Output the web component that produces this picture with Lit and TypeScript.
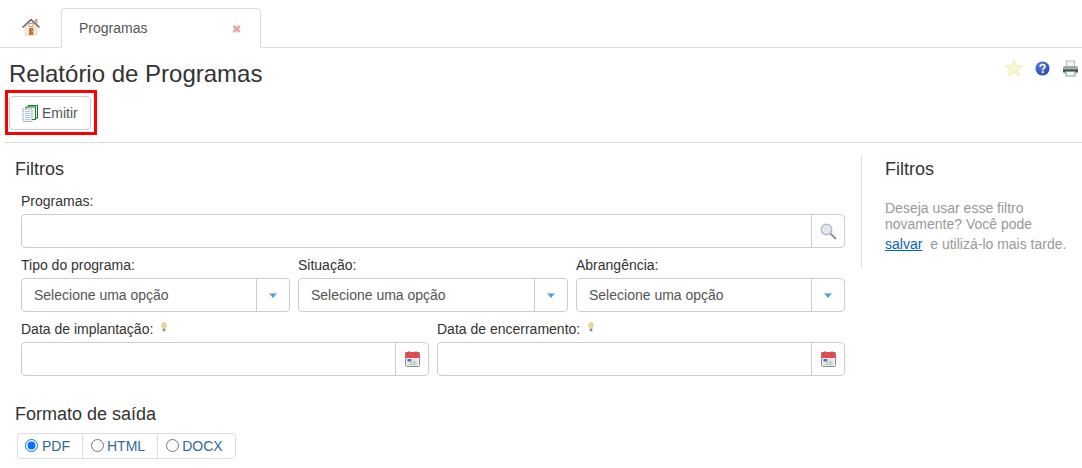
import { LitElement, html, css, svg } from "lit";
import { customElement } from "lit/decorators.js";

const house = svg`<svg width="20" height="20" viewBox="0 0 20 20"><path d="M14 2h2.5v5L14 5z" fill="#c9a58c"/><path d="M4 9.5 10 4l6 5.5V18H4z" fill="#f6ebe0" stroke="#dfccb9" stroke-width=".6"/><path d="M1.5 10.5 10 2.5l8.5 8" fill="none" stroke="#6a605c" stroke-width="1.5"/><rect x="8" y="11" width="4.4" height="7" fill="#c8762d"/><rect x="8" y="6.5" width="4" height="3" fill="#fff" stroke="#a9825f" stroke-width=".7"/><circle cx="11.3" cy="14.5" r=".5" fill="#fbe3b0"/></svg>`;
const docs = svg`<svg width="16" height="17" viewBox="0 0 16 17"><rect x="6.5" y=".5" width="9" height="12.5" fill="#dff0dd" stroke="#15782a"/><rect x="4" y="2" width="9.5" height="12.5" fill="#f0f8ef" stroke="#15782a"/><rect x="1" y="4" width="9" height="12.5" fill="#f1f5fc" stroke="#8f959e" stroke-dasharray="1 .6"/><path d="M3 6.5h5.5M3 8.5h5.5M3 10.5h5.5M3 12.5h5.5M3 14.5h5.5" stroke="#b4c9ea"/></svg>`;
const star = svg`<svg width="18" height="18" viewBox="0 0 18 18"><path d="M9 .8l2.5 5.6 6 .6-4.5 4 1.3 6L9 13.9 3.7 17l1.3-6-4.5-4 6-.6z" fill="#f9f5cc" stroke="#ece6b6" stroke-width=".7"/></svg>`;
const help = svg`<svg width="15" height="15" viewBox="0 0 15 15"><defs><radialGradient id="hb" cx=".4" cy=".3" r=".8"><stop offset="0" stop-color="#5a7fe0"/><stop offset="1" stop-color="#1f3fa8"/></radialGradient></defs><circle cx="7.5" cy="7.5" r="7" fill="url(#hb)"/><path d="M5.2 5.8c0-3 4.8-3 4.8-.2 0 1.8-2.3 1.8-2.3 3.6" fill="none" stroke="#fff" stroke-width="1.7"/><rect x="6.7" y="10.2" width="2" height="2" fill="#fff"/></svg>`;
const printer = svg`<svg width="17" height="17" viewBox="0 0 17 17"><rect x="4.5" y="1" width="8" height="6" fill="#f2f5f5" stroke="#b6bcbc"/><rect x="1" y="6" width="15" height="7.5" rx="1.5" fill="#a3a8a8"/><rect x="1" y="9.5" width="15" height="2.5" fill="#4a4e4e"/><rect x="4" y="11.5" width="9" height="4.5" fill="#f3f5f5" stroke="#7fa0a0"/></svg>`;
const search = svg`<svg width="17" height="17" viewBox="0 0 17 17"><circle cx="6.5" cy="6.5" r="5.3" fill="#dfe8f0" stroke="#b0b8c0" stroke-width="1.3"/><path d="M10.5 10.5l5.5 5.5" stroke="#8f9499" stroke-width="2"/></svg>`;
const caret = svg`<svg width="8" height="5" viewBox="0 0 8 5"><path d="M0 0h8L4 5z" fill="#4a9bdc"/><path d="M1 .5h6" stroke="#9fcdf0"/></svg>`;
const cal = svg`<svg width="15" height="16" viewBox="0 0 15 16"><rect x=".5" y="1.5" width="14" height="14" rx="1" fill="#eef0ee" stroke="#8f8f8f"/><rect x=".5" y="1" width="14" height="6" fill="#e5484d"/><path d="M4 0v3.5M11 0v3.5" stroke="#777"/><rect x="2.5" y="8" width="3.5" height="2.5" fill="#3f6fc4"/><path d="M2.5 11h10M2.5 13.2h10M6.5 8v6.5M9.5 8v6.5" stroke="#b8c8c8"/></svg>`;
const bulb = svg`<svg width="6" height="10" viewBox="0 0 6 10"><path d="M3 .5a2.5 2.5 0 0 1 1.5 4.5v1.5h-3V5A2.5 2.5 0 0 1 3 .5z" fill="#eadb86" stroke="#c9bc84" stroke-width=".5"/><rect x="1.7" y="6.8" width="2.6" height="2.4" fill="#8d8a80"/></svg>`;

@customElement("app-root")
export class AppRoot extends LitElement {
  static styles = css`
    :host { display: block; width: 1082px; height: 468px; overflow: hidden; background: #fff; color: #333; font: 14px/20px "Liberation Sans", Arial, sans-serif; }
    * { box-sizing: border-box; }
    .tabs { display: flex; height: 48px; padding-top: 8px; border-bottom: 1px solid #ddd; }
    .home { width: 61px; display: flex; align-items: center; justify-content: center; padding-bottom: 2px; }
    .home svg { display: block; margin-top: 1px; }
    .tab { width: 200px; height: 40px; display: flex; align-items: center; justify-content: space-between; padding: 0 19px 0 17px; border: 1px solid #ddd; border-bottom-color: #fff; border-radius: 4px 4px 0 0; color: #555; }
    .close { color: #e8a8ae; font-size: 11px; font-weight: bold; line-height: 1; padding-top: 3px; }
    .head { display: flex; justify-content: space-between; padding: 13px 3px 0 9px; height: 42px; }
    h1 { margin: 0; font-size: 24px; font-weight: 400; line-height: 26px; }
    .tools { display: flex; align-items: center; gap: 12px; height: 18px; margin-top: -2px; }
    .tools svg { display: block; }
    .mark { width: 92px; height: 45px; margin-left: 5px; padding: 3px 3px 2px 1px; border: 3px solid #f00; }
    button { display: flex; align-items: center; gap: 4px; width: 82px; height: 34px; padding: 0 0 0 12px; margin: 0; border: 1px solid #ccc; border-radius: 4px; background: #fff; color: #555; font: inherit; }
    button svg { display: block; }
    hr { margin: 7px 0 0 5px; border: 0; border-top: 1px solid #ddd; }
    .main { display: flex; padding-top: 12px; }
    .left { width: 861px; padding-left: 15px; flex: none; }
    h2 { margin: 0; font-size: 18px; font-weight: 400; line-height: 28px; color: #333; }
    .form { width: 824px; margin: 7px 0 0 6px; display: flex; flex-direction: column; }
    .row { display: grid; gap: 8px; }
    .r3 { grid-template-columns: 269px 270px 269px; margin-top: 6px; }
    .r2 { grid-template-columns: 408px 408px; margin-top: 6px; }
    label { display: flex; align-items: center; gap: 8px; height: 20px; margin-bottom: 4px; padding-top: 2px; }
    label svg { display: block; margin-top: -4px; }
    .field { display: flex; height: 34px; border: 1px solid #ccc; border-radius: 4px; }
    .val { flex: 1; padding-left: 12px; line-height: 32px; color: #555; }
    .add { width: 33px; flex: none; border-left: 1px solid #ccc; display: flex; align-items: center; justify-content: center; }
    .add svg { display: block; }
    h2.fmt { margin-top: 24px; }
    .radios { display: inline-flex; height: 26px; margin: 5px 0 0 2px; border: 1px solid #ddd; border-radius: 4px; color: #31689f; }
    .radios div { display: flex; align-items: center; padding: 0 12px 0 8px; border-left: 1px solid #ddd; }
    .radios div:first-child { border-left: 0; padding-left: 7px; }
    .radios input { width: 13px; height: 13px; margin: 0 3px 2px 0; }
    .radios .w1 input { margin-right: 4px; }
    aside { width: 221px; height: 113px; margin-top: 0; border-left: 1px solid #ddd; padding-left: 23px; color: #999; }
    aside p { margin: 17px 0 0; line-height: 16px; }
    aside .l2 { display: block; margin-top: 4px; line-height: 16px; }
    a { color: #0563c1; text-decoration: underline; margin-right: 4px; }
  `;
  render() {
    return html`
      <nav class="tabs">
        <div class="home">${house}</div>
        <div class="tab"><span>Programas</span><span class="close">✖</span></div>
      </nav>
      <header class="head">
        <h1>Relatório de Programas</h1>
        <div class="tools">${star}${help}${printer}</div>
      </header>
      <div class="mark"><button>${docs}Emitir</button></div>
      <hr />
      <div class="main">
        <section class="left">
          <h2>Filtros</h2>
          <div class="form">
            <div>
              <label>Programas:</label>
              <div class="field"><div class="val"></div><div class="add">${search}</div></div>
            </div>
            <div class="row r3">
              ${["Tipo do programa:", "Situação:", "Abrangência:"].map(
                (l) => html`<div><label>${l}</label><div class="field"><div class="val">Selecione uma opção</div><div class="add">${caret}</div></div></div>`
              )}
            </div>
            <div class="row r2">
              ${["Data de implantação:", "Data de encerramento:"].map(
                (l) => html`<div><label>${l}${bulb}</label><div class="field"><div class="val"></div><div class="add">${cal}</div></div></div>`
              )}
            </div>
          </div>
          <h2 class="fmt">Formato de saída</h2>
          <div class="radios">
            <div class="w1"><input type="radio" name="f" checked />PDF</div>
            <div><input type="radio" name="f" />HTML</div>
            <div><input type="radio" name="f" />DOCX</div>
          </div>
        </section>
        <aside>
          <h2>Filtros</h2>
          <p>Deseja usar esse filtro<br />novamente? Você pode</p>
          <span class="l2"><a href="#">salvar</a> e utilizá-lo mais tarde.</span>
        </aside>
      </div>
    `;
  }
}
